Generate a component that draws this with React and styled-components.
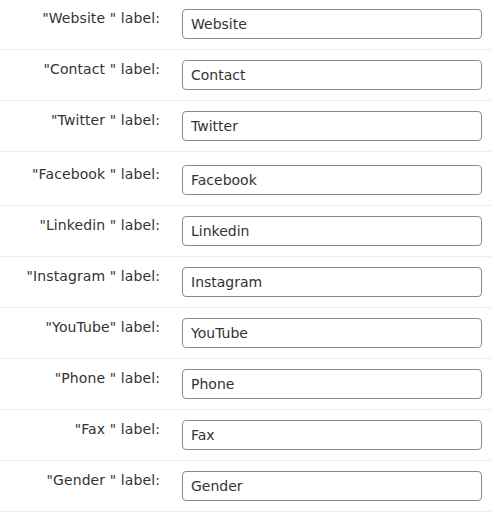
import React from "react";
import styled, { createGlobalStyle } from "styled-components";

const fields = [
  { label: "\"Website \" label:", value: "Website", first: true },
  { label: "\"Contact \" label:", value: "Contact" },
  { label: "\"Twitter \" label:", value: "Twitter" },
  { label: "\"Facebook \" label:", value: "Facebook", tall: true },
  { label: "\"Linkedin \" label:", value: "Linkedin" },
  { label: "\"Instagram \" label:", value: "Instagram" },
  { label: "\"YouTube\" label:", value: "YouTube" },
  { label: "\"Phone \" label:", value: "Phone" },
  { label: "\"Fax \" label:", value: "Fax" },
  { label: "\"Gender \" label:", value: "Gender" },
];

function App() {
  return (
    <Form>
      <CSSReset />
      {fields.map((f) => (
        <Row key={f.value} $first={f.first} $tall={f.tall}>
          <Label>{f.label}</Label>
          <Input type="text" defaultValue={f.value} />
        </Row>
      ))}
    </Form>
  );
}

const CSSReset = createGlobalStyle`
  *, *::before, *::after {
    margin: 0;
    padding: 0;
    box-sizing: border-box;
  }
  body {
    background: #fff;
    font-family: "DejaVu Sans", Verdana, sans-serif;
    font-size: 14px;
    color: #333;
  }
`;

const Form = styled.div`
  width: 491px;
  display: flex;
  flex-direction: column;
`;

const Row = styled.div`
  display: grid;
  grid-template-columns: 160px 300px;
  column-gap: 22px;
  align-items: start;
  padding: ${(p) => (p.$first ? "9px" : p.$tall ? "13px" : "10px")} 0 10px;
  border-bottom: 1px solid #ececec;
`;

const Label = styled.label`
  padding-top: 1px;
  text-align: right;
  line-height: 16px;
  letter-spacing: 0.1px;
  color: #333;
`;

const Input = styled.input`
  width: 300px;
  height: 30px;
  padding: 0 8px;
  border: 1px solid #8a8a8a;
  border-radius: 4px;
  font-family: "DejaVu Sans", Verdana, sans-serif;
  font-size: 14px;
  color: #333;
  background: #fff;
  outline: none;
`;

export default App;
